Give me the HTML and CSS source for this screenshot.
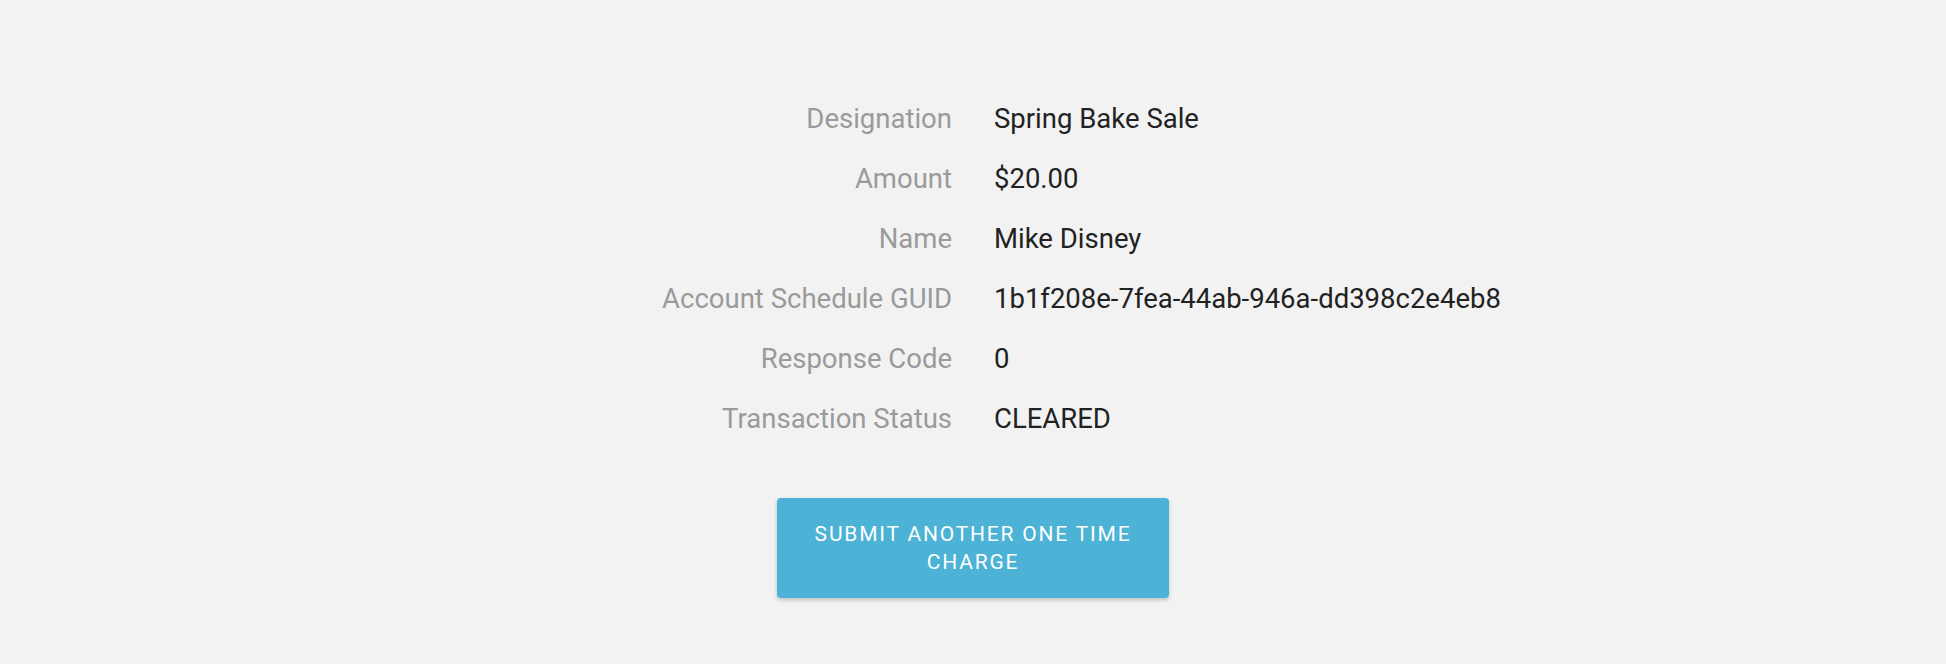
FILE: index.html
```html
<!DOCTYPE html>
<html lang="en">
<head>
<meta charset="utf-8">
<title>Receipt</title>
<link rel="stylesheet" href="styles.css">
</head>
<body>
<main class="page">
  <dl class="details">
    <dt>Designation</dt><dd>Spring Bake Sale</dd>
    <dt>Amount</dt><dd>$20.00</dd>
    <dt>Name</dt><dd>Mike Disney</dd>
    <dt>Account Schedule GUID</dt><dd>1b1f208e-7fea-44ab-946a-dd398c2e4eb8</dd>
    <dt>Response Code</dt><dd>0</dd>
    <dt>Transaction Status</dt><dd>CLEARED</dd>
  </dl>
  <div class="actions">
    <button class="btn" type="button">Submit another one time charge</button>
  </div>
</main>
</body>
</html>
```

FILE: styles.css
```css
html, body {
  margin: 0;
  padding: 0;
  background: #f2f2f2;
}
body {
  font-family: Roboto, "Liberation Sans", sans-serif;
  min-height: 664px;
}
.page {
  padding-top: 89px;
  display: flex;
  flex-direction: column;
  align-items: stretch;
}
.details {
  margin: 0;
  display: grid;
  grid-template-columns: 1fr 1fr;
  column-gap: 42px;
  font-size: 27.5px;
  line-height: 60px;
}
.details dt {
  text-align: right;
  color: #9a9a9a;
}
.details dd {
  margin: 0;
  color: #222222;
}
.actions {
  display: flex;
  justify-content: center;
  padding-top: 49px;
}
.btn {
  width: 392px;
  padding: 22px 24px;
  border: none;
  border-radius: 4px;
  background: #4cb2d6;
  color: #ffffff;
  font-family: Roboto, "Liberation Sans", sans-serif;
  font-size: 21px;
  line-height: 28px;
  letter-spacing: 1.8px;
  text-transform: uppercase;
  box-shadow: 0 2px 4px rgba(0, 0, 0, 0.2);
  cursor: pointer;
}
```
